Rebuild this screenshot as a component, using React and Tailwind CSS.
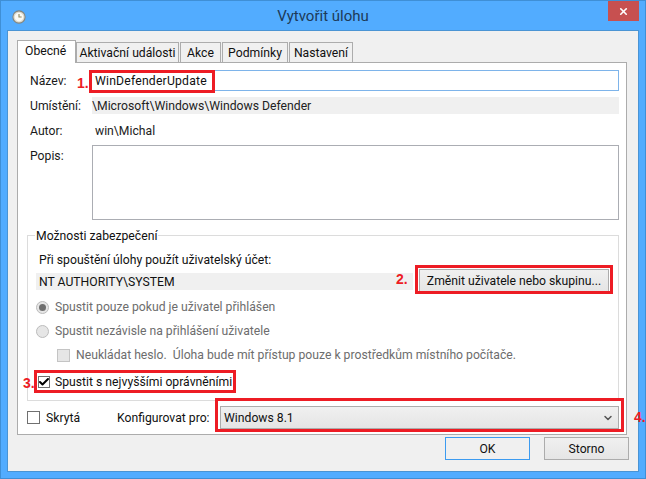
import { ChevronDown, Check, X } from 'lucide-react';

const tabs = [
  { label: 'Aktivační události', w: 'w-[103px]' },
  { label: 'Akce', w: 'w-[41px]' },
  { label: 'Podmínky', w: 'w-[66px]' },
  { label: 'Nastavení', w: 'w-[64px]' },
];

function Row({ label, children, className = '', labelClass = '' }) {
  return (
    <div className={`flex ${className}`}>
      <span className={`w-[63px] pl-[12px] shrink-0 text-[#1a1a1a] ${labelClass}`}>{label}</span>
      {children}
    </div>
  );
}

function Mark({ className }) {
  return <div className={`absolute border-[3px] border-[#ed1c24] pointer-events-none ${className}`} />;
}

function Num({ className, children }) {
  return <span className={`absolute font-['Liberation_Sans',sans-serif] text-[14px] leading-[16px] font-bold text-[#ed1c24] ${className}`}>{children}</span>;
}

export default function App() {
  return (
    <main className="relative w-[646px] h-[479px] overflow-hidden bg-[#52acff] border border-[#3f8fd6] font-['Roboto',sans-serif] text-[12.2px] leading-[16px] text-[#111]">
      {/* title bar */}
      <header className="relative h-[30px] flex items-center justify-center">
        <svg viewBox="0 0 16 16" className="absolute left-[11px] top-[9px] w-[14px] h-[14px]">
          <circle cx="8" cy="8" r="7" fill="#dcd9cc" stroke="#85857c" strokeWidth="1.2" />
          <circle cx="8" cy="8" r="5" fill="#fbfaf4" />
          <path d="M8 4.5V8H11" fill="none" stroke="#8f8a60" strokeWidth="1.3" />
        </svg>
        <h1 className="text-[15px] leading-[20px] text-[#1d3a58]">Vytvořit úlohu</h1>
        <div className="absolute right-[6px] top-0 w-[31px] h-[20px] bg-[#c75050] flex items-center justify-center">
          <X size={11} strokeWidth={3.5} className="text-white" />
        </div>
      </header>

      {/* client area */}
      <div className="absolute left-[6px] top-[29px] w-[632px] h-[442px] bg-[#f0f0f0] border border-[#4a94d4] pl-[9px] pt-[9px]">
        <div className="flex items-end h-[22px]">
          <div className="relative z-10 w-[59px] h-[23px] -mb-[1px] bg-white border border-b-0 border-[#acacac] pl-[7px] pt-[2px]">Obecné</div>
          {tabs.map((tab) => (
            <div key={tab.label} className={`${tab.w} h-[20px] mr-[1px] bg-[#f0f0f0] border border-b-0 border-[#acacac] text-center leading-[20px] whitespace-nowrap`}>{tab.label}</div>
          ))}
        </div>

        <section className="w-[610px] h-[373px] bg-white border border-[#acacac] pt-[7px]">
          <Row label="Název:" className="items-center" labelClass="pt-[1px]">
            <div className="ml-[9px] w-[529px] h-[21px] border border-[#7eb4ea] pl-[4px] leading-[20px] tracking-[0.2px] text-[#111]">WinDefenderUpdate</div>
          </Row>
          <Row label="Umístění:" className="items-center mt-[6px]" labelClass="pt-[1px]">
            <div className="ml-[11px] w-[527px] h-[17px] bg-[#f0f0f0] leading-[18px] text-[#222]">\Microsoft\Windows\Windows Defender</div>
          </Row>
          <Row label="Autor:" className="mt-[8px]" labelClass="pt-[1px]">
            <span className="ml-[14px] pt-[1px] text-[#222]">win\Michal</span>
          </Row>
          <Row label="Popis:" className="mt-[6px]" labelClass="mt-[3px]">
            <div className="ml-[11px] w-[527px] h-[75px] border border-[#abadb3]" />
          </Row>

          {/* security group */}
          <fieldset className="ml-[9px] mt-[15px] w-[592px] h-[166px] border border-[#dcdcdc] relative">
            <legend className="absolute left-[7px] -top-[8px] bg-white px-[1px]">Možnosti zabezpečení</legend>
            <p className="pl-[11px] pt-[16px]">Při spouštění úlohy použít uživatelský účet:</p>
            <div className="flex items-center mt-[1px]">
              <div className="ml-[8px] w-[377px] h-[17px] bg-[#f0f0f0] pl-[3px] leading-[18px]">NT AUTHORITY\SYSTEM</div>
              <button className="ml-[6px] w-[190px] h-[24px] border border-[#acacac] bg-gradient-to-b from-[#f0f0f0] to-[#e5e5e5] text-center">Změnit uživatele nebo skupinu...</button>
            </div>
            <div className="flex items-center mt-[6px] ml-[8px] h-[16px] text-[#6d6d6d]">
              <span className="w-[13px] h-[13px] rounded-full border border-[#bcbcbc] bg-[#e6e6e6] flex items-center justify-center">
                <span className="w-[7px] h-[7px] rounded-full bg-[#6f6f6f]" />
              </span>
              <span className="ml-[6px]">Spustit pouze pokud je uživatel přihlášen</span>
            </div>
            <div className="flex items-center mt-[8px] ml-[8px] h-[16px] text-[#6d6d6d]">
              <span className="w-[13px] h-[13px] rounded-full border border-[#bcbcbc] bg-[#e6e6e6]" />
              <span className="ml-[6px]">Spustit nezávisle na přihlášení uživatele</span>
            </div>
            <div className="flex items-center mt-[8px] ml-[29px] h-[16px] text-[#6d6d6d]">
              <span className="w-[13px] h-[13px] border border-[#c4c4c4] bg-[#e6e6e6]" />
              <span className="ml-[6px] whitespace-pre">Neukládat heslo.  Úloha bude mít přístup pouze k prostředkům místního počítače.</span>
            </div>
            <div className="flex items-center mt-[11px] ml-[10px] h-[16px]">
              <span className="w-[12px] h-[12px] border border-[#707070] bg-white flex items-center justify-center">
                <Check size={12} strokeWidth={4} className="text-black shrink-0" />
              </span>
              <span className="ml-[5px]">Spustit s nejvyššími oprávněními</span>
            </div>
          </fieldset>

          <div className="flex items-center ml-[9px] mt-[5px]">
            <span className="w-[13px] h-[13px] border border-[#707070] bg-white" />
            <span className="ml-[6px] w-[40px]">Skrytá</span>
            <span className="ml-[31px] w-[103px] whitespace-nowrap">Konfigurovat pro:</span>
            <div className="w-[399px] h-[23px] border border-[#acacac] bg-gradient-to-b from-[#f0f0f0] to-[#e5e5e5] flex items-center justify-between pl-[3px] pr-[4px]">
              <span>Windows 8.1</span>
              <ChevronDown size={12} strokeWidth={3} className="text-[#555]" />
            </div>
          </div>
        </section>

        <div className="flex justify-end gap-[14px] mt-[2px] pr-[9px]">
          <button className="w-[85px] h-[23px] border border-[#3c9bf0] bg-[#f0f0f0]">OK</button>
          <button className="w-[85px] h-[23px] border border-[#acacac] bg-gradient-to-b from-[#f0f0f0] to-[#e5e5e5]">Storno</button>
        </div>
      </div>

      {/* annotations drawn over the dialog */}
      <Mark className="left-[88px] top-[69px] w-[126px] h-[23px]" />
      <Mark className="left-[414px] top-[264px] w-[198px] h-[29px]" />
      <Mark className="left-[33px] top-[369px] w-[202px] h-[23px]" />
      <Mark className="left-[214px] top-[397px] w-[409px] h-[34px]" />
      <Num className="left-[76px] top-[74px]">1.</Num>
      <Num className="left-[395px] top-[270px]">2.</Num>
      <Num className="left-[22px] top-[374px]">3.</Num>
      <Num className="left-[633px] top-[408px]">4.</Num>
    </main>
  );
}
